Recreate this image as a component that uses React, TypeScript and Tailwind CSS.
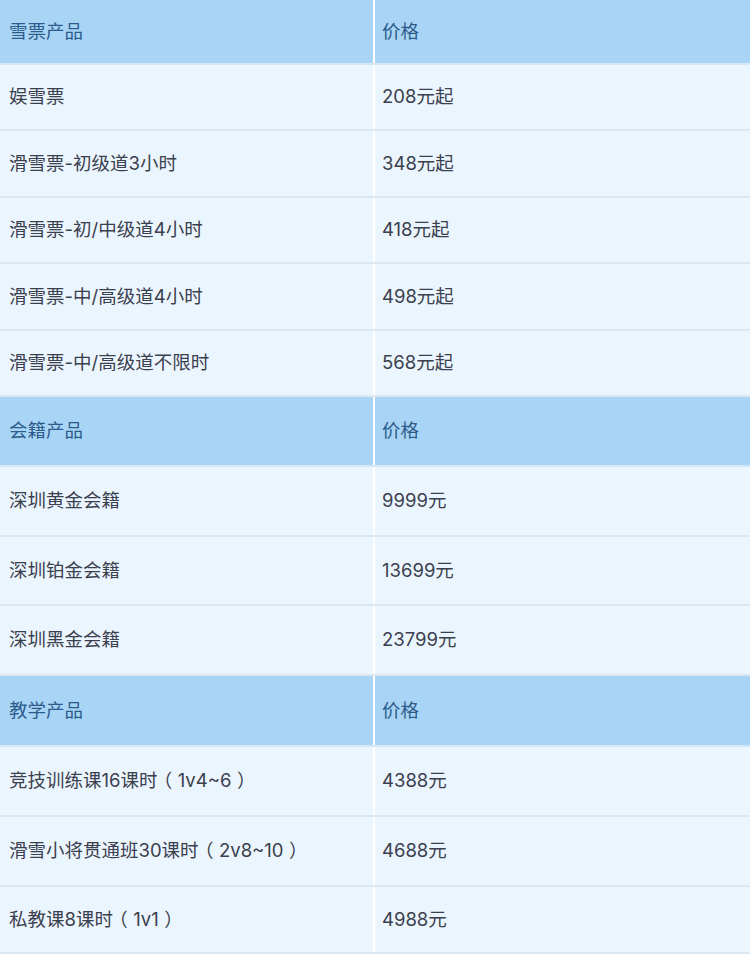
import type { ReactNode } from "react"

type Row = {
  name: string
  price: string
  head?: boolean
  h: string
}

const rows: Row[] = [
  { name: "雪票产品", price: "价格", head: true, h: "h-[65px]" },
  { name: "娱雪票", price: "208元起", h: "h-[66px]" },
  { name: "滑雪票-初级道3小时", price: "348元起", h: "h-[67px]" },
  { name: "滑雪票-初/中级道4小时", price: "418元起", h: "h-[66px]" },
  { name: "滑雪票-中/高级道4小时", price: "498元起", h: "h-[67px]" },
  { name: "滑雪票-中/高级道不限时", price: "568元起", h: "h-[66px]" },
  { name: "会籍产品", price: "价格", head: true, h: "h-[70px]" },
  { name: "深圳黄金会籍", price: "9999元", h: "h-[70px]" },
  { name: "深圳铂金会籍", price: "13699元", h: "h-[69px]" },
  { name: "深圳黑金会籍", price: "23799元", h: "h-[70px]" },
  { name: "教学产品", price: "价格", head: true, h: "h-[71px]" },
  { name: "竞技训练课16课时（1v4~6）", price: "4388元", h: "h-[70px]" },
  { name: "滑雪小将贯通班30课时（2v8~10）", price: "4688元", h: "h-[70px]" },
  { name: "私教课8课时（1v1）", price: "4988元", h: "h-[67px]" },
]

// full-width parens: half-width glyph centred in a 1em box, like PingFang
const withParens = (text: string): ReactNode[] =>
  text.split(/([（）])/).map((part, i) =>
    part === "（" || part === "）" ? (
      <span
        key={i}
        className="inline-block w-[1.1em] text-center [font-feature-settings:'halt']"
      >
        {part}
      </span>
    ) : (
      part
    )
  )

export default function App() {
  return (
    <div
      className="w-[750px] h-[954px] overflow-hidden bg-[#ebf5fe] text-[18.5px]"
      style={{ fontFamily: 'Inter, "Noto Sans CJK SC", sans-serif' }}
    >
      {rows.map((r, i) => (
        <div
          key={i}
          className={
            r.head
              ? `flex ${r.h} bg-[#a8d5f6] text-[#2d5b8b] border-b-2 border-[#d6e7f4]`
              : `flex ${r.h} bg-[#ebf5fe] text-[#3b404e] border-b-2 border-[#dde7ef]`
          }
        >
          <div className="flex w-[375px] shrink-0 items-center whitespace-pre border-r-2 border-white pl-[9px]">
            <span>{withParens(r.name)}</span>
          </div>
          <div className="flex flex-1 items-center pl-[7px]">{r.price}</div>
        </div>
      ))}
    </div>
  )
}
